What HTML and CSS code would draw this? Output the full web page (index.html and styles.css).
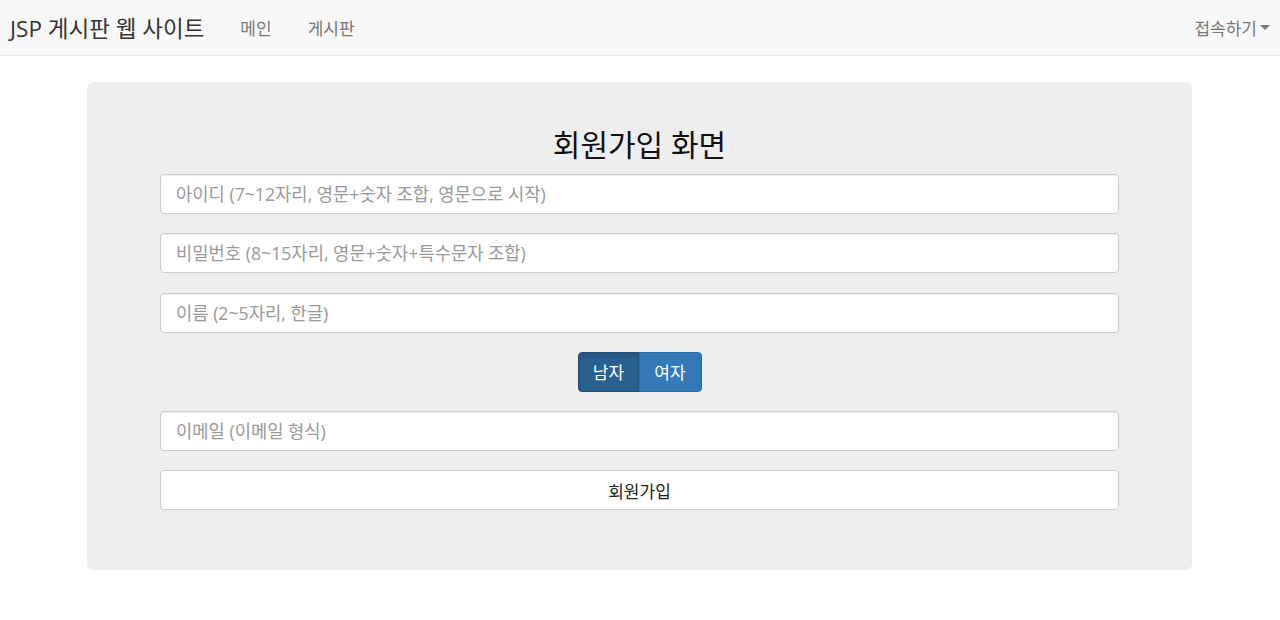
FILE: index.html
```html
<!DOCTYPE html>
<html lang="ko">
<head>
<meta charset="utf-8">
<title>JSP 게시판 웹 사이트</title>
<link rel="stylesheet" href="styles.css">
</head>
<body>
<nav class="navbar">
  <div class="nav-left">
    <a class="brand" href="#">JSP 게시판 웹 사이트</a>
    <a class="nav-link" href="#">메인</a>
    <a class="nav-link" href="#">게시판</a>
  </div>
  <a class="nav-link dropdown" href="#">접속하기<span class="caret"></span></a>
</nav>
<main class="container">
  <section class="jumbotron">
    <h3 class="title">회원가입 화면</h3>
    <form class="form">
      <input class="form-control" type="text" placeholder="아이디 (7~12자리, 영문+숫자 조합, 영문으로 시작)">
      <input class="form-control" type="password" placeholder="비밀번호 (8~15자리, 영문+숫자+특수문자 조합)">
      <input class="form-control" type="text" placeholder="이름 (2~5자리, 한글)">
      <div class="btn-row">
        <div class="btn-group">
          <button type="button" class="btn btn-primary active">남자</button>
          <button type="button" class="btn btn-primary">여자</button>
        </div>
      </div>
      <input class="form-control" type="email" placeholder="이메일 (이메일 형식)">
      <button type="button" class="form-control submit">회원가입</button>
    </form>
  </section>
</main>
</body>
</html>
```

FILE: styles.css
```css
* { box-sizing: border-box; }
html, body { margin: 0; padding: 0; }
body {
  font-family: "Open Sans", "Noto Sans CJK KR", sans-serif;
  color: #333;
  background: #fff;
  font-size: 17px;
}
a { text-decoration: none; }

.navbar {
  height: 56px;
  background: #f8f8f8;
  border-bottom: 1px solid #e7e7e7;
  display: flex;
  align-items: center;
  justify-content: space-between;
  padding: 0 10px 0 10px;
}
.nav-left { display: flex; align-items: center; }
.brand {
  font-size: 22.5px;
  color: #333;
  margin-right: 36px;
  white-space: nowrap;
}
.nav-link {
  font-size: 17px;
  color: #777;
  margin-right: 36px;
  white-space: nowrap;
}
.nav-link.dropdown { margin-right: 0; display: flex; align-items: center; }
.caret {
  display: inline-block;
  width: 0; height: 0;
  margin-left: 3px;
  border-top: 5px solid #777;
  border-left: 5px solid transparent;
  border-right: 5px solid transparent;
}

.container {
  width: 1105px;
  margin: 26px 0 0 calc(50% - 553px);
}
.jumbotron {
  background: #eeeeee;
  border-radius: 6px;
  padding: 42px 73px 58px 73px;
  height: 488px;
}
.title {
  margin: 0 0 8px;
  text-align: center;
  font-size: 30px;
  font-weight: 400;
  color: #111;
  line-height: 42px;
}
.form {
  display: flex;
  flex-direction: column;
  gap: 19.3px;
}
.form-control {
  display: block;
  width: 100%;
  height: 40px;
  padding: 0 15px;
  font-family: inherit;
  font-size: 17.7px;
  color: #333;
  background: #fff;
  border: 1px solid #ccc;
  border-radius: 4px;
  box-shadow: inset 0 1px 1px rgba(0,0,0,.075);
  outline: none;
}
.form-control::placeholder { color: #999; }
.submit {
  text-align: center;
  font-size: 17px;
  color: #222;
  box-shadow: none;
  cursor: pointer;
}
.btn-row { display: flex; justify-content: center; height: 40px; }
.btn-group { display: flex; }
.btn {
  height: 40px;
  padding: 0;
  font-family: inherit;
  font-size: 17px;
  color: #fff;
  background: #337ab7;
  border: 1px solid #2e6da4;
  white-space: nowrap;
  cursor: pointer;
}
.btn-group .btn:first-child { border-radius: 4px 0 0 4px; width: 62px; }
.btn-group .btn:last-child { border-radius: 0 4px 4px 0; margin-left: -1px; width: 63px; }
.btn.active {
  background: #286090;
  border-color: #204d74;
  box-shadow: inset 0 3px 5px rgba(0,0,0,.125);
}
```
